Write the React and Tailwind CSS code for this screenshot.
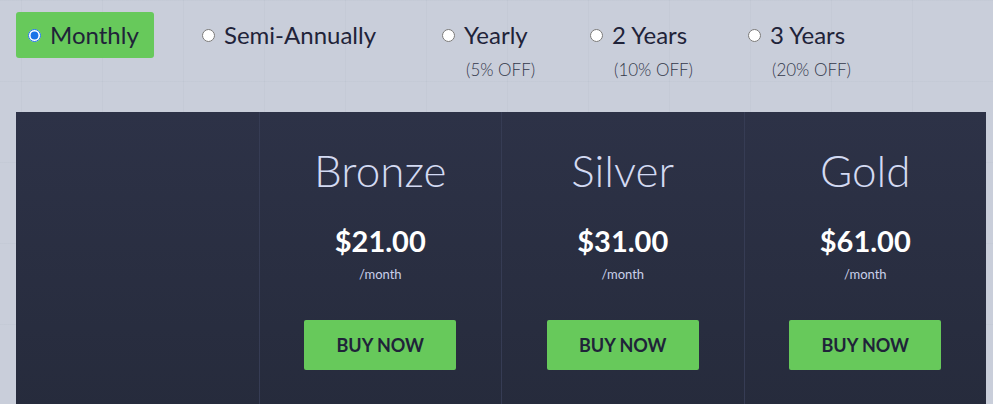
import React from 'react';

const plans = [
    { name: 'Bronze', price: '$21.00' },
    { name: 'Silver', price: '$31.00' },
    { name: 'Gold', price: '$61.00' },
];

const cycles = [
    { label: 'Semi-Annually', width: 'w-[240px]' },
    { label: 'Yearly', off: '(5% OFF)', width: 'w-[148px]' },
    { label: '2 Years', off: '(10% OFF)', width: 'w-[158px]' },
    { label: '3 Years', off: '(20% OFF)', width: 'w-[200px]' },
];

const App = () => (
    <div className="min-h-screen bg-[#c9ceda] bg-[linear-gradient(to_right,rgba(60,70,100,0.03)_1px,transparent_1px),linear-gradient(to_bottom,rgba(60,70,100,0.03)_1px,transparent_1px)] bg-[size:81px_81px] bg-[position:21px_0] font-['Lato',sans-serif] overflow-hidden">
        <div className="h-[112px] pt-3 pl-4 flex items-start text-[#1f2339]">
            <label className="w-[138px] h-[46px] px-3 flex items-center gap-[9px] bg-[#67c95b] rounded-[3px]">
                <input type="radio" name="cycle" defaultChecked className="m-0 w-[13px] h-[13px] accent-[#1a73e8]" />
                <span className="text-[24px] leading-none">Monthly</span>
            </label>
            <div className="ml-[48px] flex">
                {cycles.map((c) => (
                    <div key={c.label} className={`${c.width} flex flex-col`}>
                        <label className="h-[46px] flex items-center gap-[9px]">
                            <input type="radio" name="cycle" className="m-0 w-[13px] h-[13px]" />
                            <span className="text-[24px] leading-none">{c.label}</span>
                        </label>
                        {c.off && <span className="pl-[24px] mt-[2px] text-[17px] leading-[20px] font-light text-[#33384a]">{c.off}</span>}
                    </div>
                ))}
            </div>
        </div>
        <div className="ml-4 w-[970px] h-[300px] grid grid-cols-4 bg-[linear-gradient(to_bottom,#2d3247,#262b3c)]">
            <div />
            {plans.map((p) => (
                <div key={p.name} className="border-l border-[#363c54] flex flex-col items-center pt-[30px]">
                    <h3 className="text-[44px] leading-[56px] font-light text-[#d3daf2]">{p.name}</h3>
                    <p className="mt-[26px] text-[29px] leading-[34px] font-bold text-white">{p.price}</p>
                    <p className="mt-[7px] text-[13px] leading-[18px] text-[#c9d0ea]">/month</p>
                    <button className="mt-[37px] w-[152px] h-[50px] bg-[#67c95b] rounded-[2px] text-[18px] font-bold text-[#1f2339] uppercase">Buy Now</button>
                </div>
            ))}
        </div>
    </div>
);

export default App;
